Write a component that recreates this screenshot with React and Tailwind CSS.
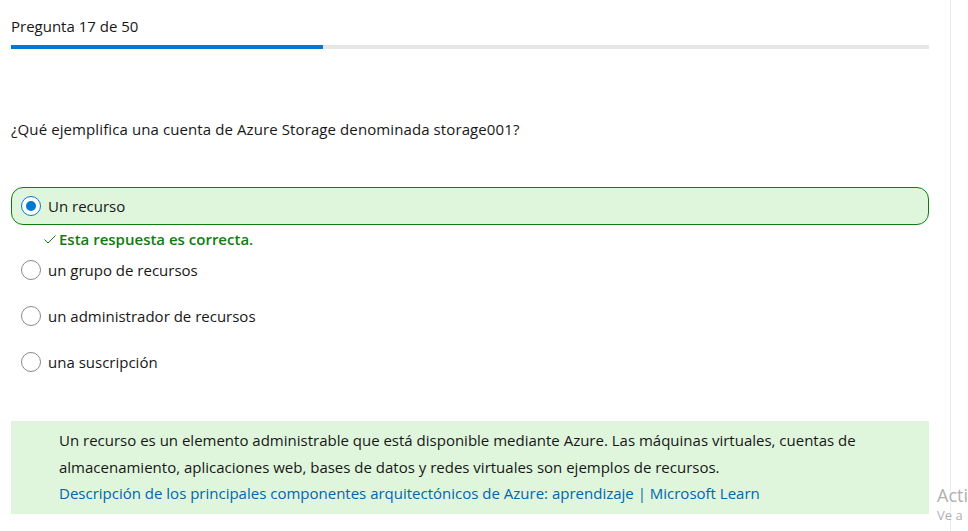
import React from 'react';

const options = [
  { id: 'a', label: 'Un recurso', correct: true },
  { id: 'b', label: 'un grupo de recursos' },
  { id: 'c', label: 'un administrador de recursos' },
  { id: 'd', label: 'una suscripción' },
];

function Radio({ checked }) {
  return (
    <span
      className={
        'flex h-[20px] w-[20px] shrink-0 items-center justify-center rounded-full border-[1.5px] bg-white ' +
        (checked ? 'border-[#0078d4]' : 'border-[#8a8a8a]')
      }
    >
      {checked && <span className="h-[10px] w-[10px] rounded-full bg-[#0078d4]" />}
    </span>
  );
}

export default function App() {
  const current = 17;
  const total = 50;

  return (
    <div className="relative flex h-[531px] w-[968px] overflow-hidden bg-white font-['Open_Sans',sans-serif] text-[15px] text-[#171717]">
      {/* main column */}
      <div className="w-[950px] pl-[11px] pr-[21px]">
        <div className="pt-[16px] leading-[20px]">Pregunta {current} de {total}</div>
        <div className="mt-[9px] h-[4px] w-full bg-[#e6e6e6]">
          <div className="h-full bg-[#0078d4]" style={{ width: `${(current / total) * 100}%` }} />
        </div>

        <p className="mt-[70px] leading-[20px] tracking-[0.1px]">¿Qué ejemplifica una cuenta de Azure Storage denominada storage001?</p>

        <div className="mt-[48px] flex flex-col">
          {options.map((opt) =>
            opt.correct ? (
              <div key={opt.id}>
                <div className="flex h-[38px] items-center gap-[7px] rounded-[12px] border border-[#107c10] bg-[#dff6dd] px-[9px]">
                  <Radio checked />
                  <span>{opt.label}</span>
                </div>
                <div className="mt-[3px] flex h-[22px] items-center pl-[32px] font-semibold text-[#107c10]">
                  <svg width="14" height="14" viewBox="0 0 14 14" className="mr-[2px]">
                    <path d="M1.5 7.5 L5 11 L12.5 3.5" fill="none" stroke="#107c10" strokeWidth="1" />
                  </svg>
                  Esta respuesta es correcta.
                </div>
              </div>
            ) : (
              <div key={opt.id} className="-mt-[3px] flex h-[46px] items-center gap-[7px] px-[10px] [&+&]:mt-0">
                <Radio />
                <span>{opt.label}</span>
              </div>
            )
          )}
        </div>

        <div className="mt-[36px] bg-[#dff6dd] pb-[7px] pl-[48px] pr-[20px] pt-[6px] leading-[26.5px]">
          <p>
            Un recurso es un elemento administrable que está disponible mediante Azure. Las máquinas virtuales, cuentas de
            almacenamiento, aplicaciones web, bases de datos y redes virtuales son ejemplos de recursos.
          </p>
          <a href="#" className="text-[#0065b3]">
            Descripción de los principales componentes arquitectónicos de Azure: aprendizaje | Microsoft Learn
          </a>
        </div>
      </div>

      {/* scrollbar track */}
      <div className="w-[18px] border-l border-[#ececec] bg-white" />

      {/* activation watermark (cut by window edge) */}
      <div className="pointer-events-none absolute left-[937px] top-[484px] whitespace-nowrap leading-tight text-[#b0b0b0]">
        <div className="text-[18px]">Acti</div>
        <div className="text-[13px]">Ve a</div>
      </div>
    </div>
  );
}
